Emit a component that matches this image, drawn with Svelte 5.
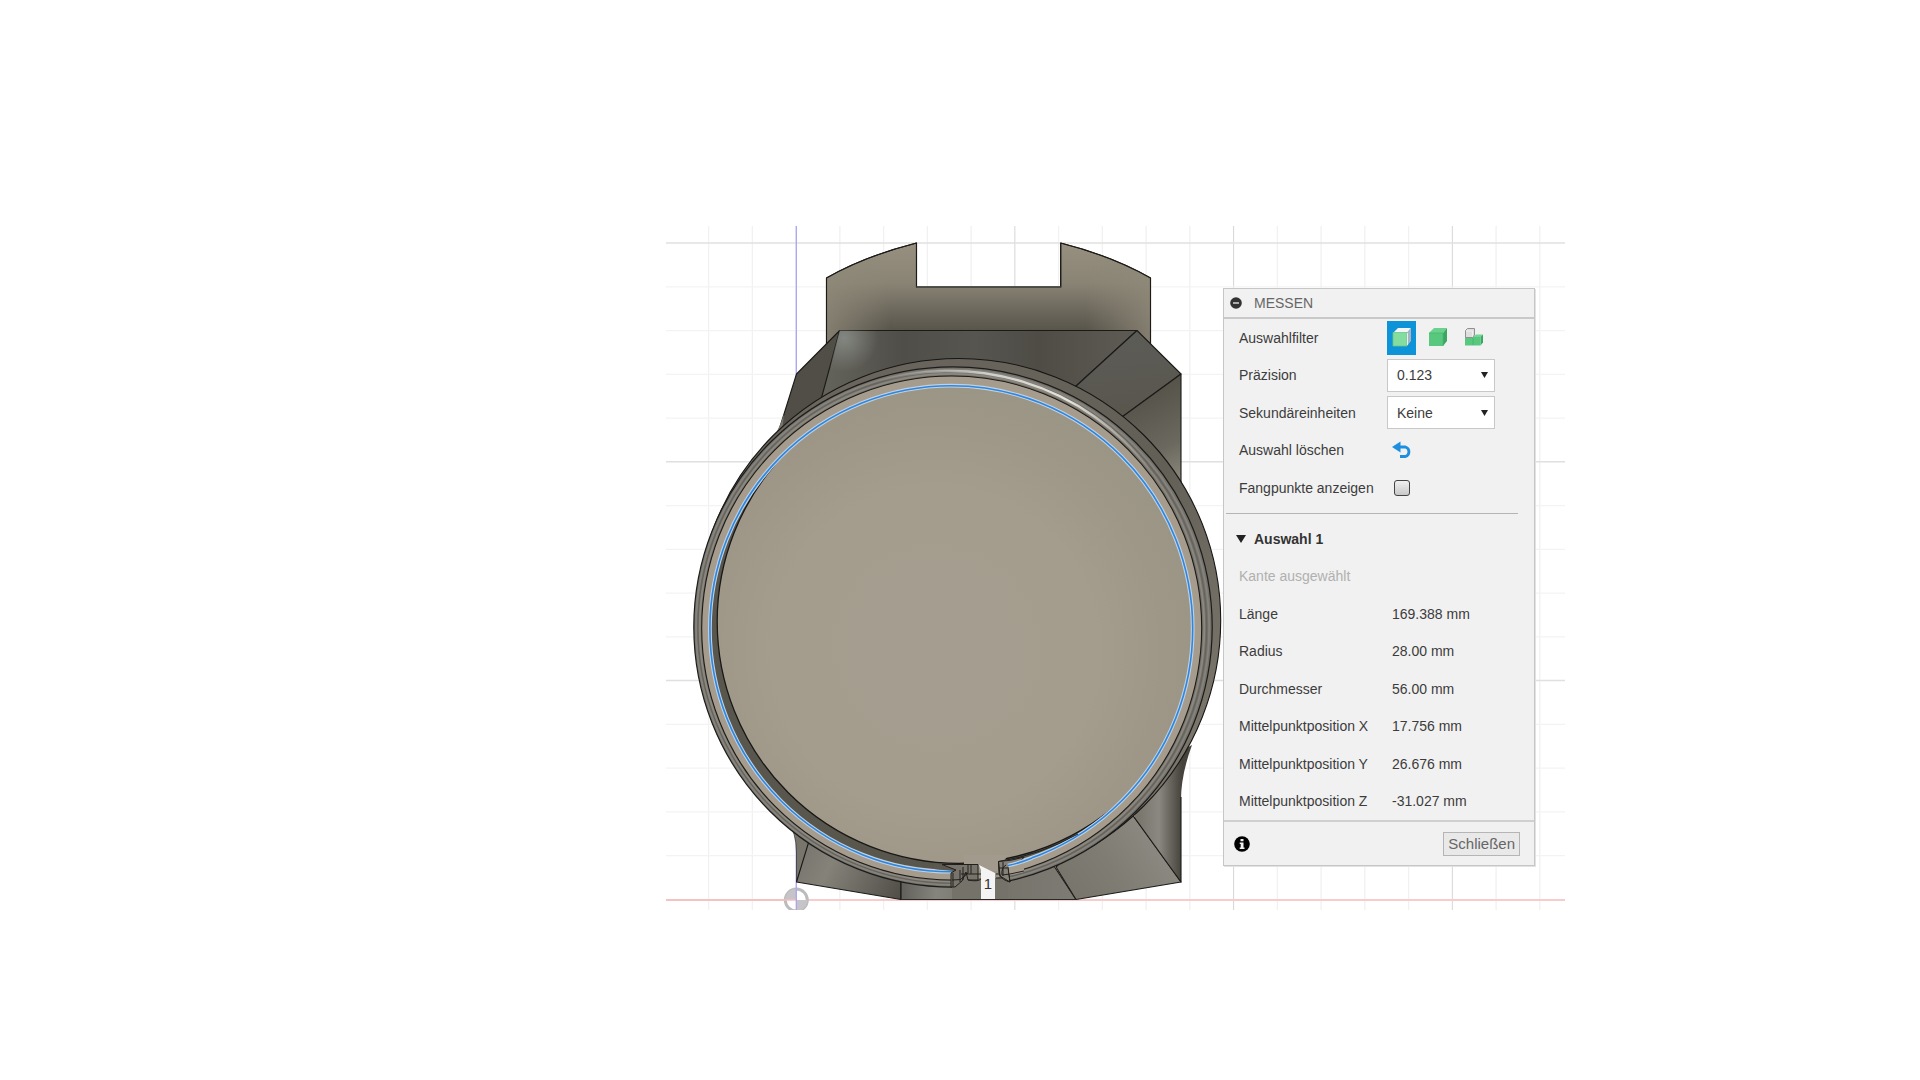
<script>
  const step = 43.75;
  const verticals = Array.from({ length: 20 }, (_, i) => ({ at: 708.6 + i * step, major: i % 5 === 2 && i !== 2 }));
  const horizontals = Array.from({ length: 15 }, (_, i) => ({ at: 243.1 + i * step, major: i % 5 === 0 }));

  const values = [
    ['Länge', '169.388 mm'],
    ['Radius', '28.00 mm'],
    ['Durchmesser', '56.00 mm'],
    ['Mittelpunktposition X', '17.756 mm'],
    ['Mittelpunktposition Y', '26.676 mm'],
    ['Mittelpunktposition Z', '-31.027 mm'],
  ];

  let filter = $state('face');
  let precision = $state('0.123');
  let units = $state('Keine');
  let snap = $state(false);
  let expanded = $state(true);
</script>

<main>
  <section class="viewport">
    <svg class="scene" viewBox="666 226 899 684" role="img" aria-label="3D-Modell">
      <defs>
        <linearGradient id="tab" x1="0" y1="243" x2="0" y2="331" gradientUnits="userSpaceOnUse">
          <stop offset="0" stop-color="#979080" />
          <stop offset=".45" stop-color="#8a8475" />
          <stop offset=".7" stop-color="#736e62" />
          <stop offset="1" stop-color="#57544a" />
        </linearGradient>
        <linearGradient id="tabSides" x1="826" y1="0" x2="1151" y2="0" gradientUnits="userSpaceOnUse">
          <stop offset="0" stop-color="#8f8979" stop-opacity=".8" />
          <stop offset=".2" stop-color="#8f8979" stop-opacity="0" />
          <stop offset=".8" stop-color="#8f8979" stop-opacity="0" />
          <stop offset="1" stop-color="#8f8979" stop-opacity=".8" />
        </linearGradient>
        <linearGradient id="slope" x1="830" y1="340" x2="1120" y2="340" gradientUnits="userSpaceOnUse">
          <stop offset="0" stop-color="#62615a" />
          <stop offset=".25" stop-color="#504e48" />
          <stop offset=".5" stop-color="#575550" />
          <stop offset=".72" stop-color="#4e4c45" />
          <stop offset="1" stop-color="#5b5952" />
        </linearGradient>
        <radialGradient id="glint" cx="844" cy="338" r="34" gradientUnits="userSpaceOnUse">
          <stop offset="0" stop-color="#8a8e88" stop-opacity=".85" />
          <stop offset="1" stop-color="#8a8e88" stop-opacity="0" />
        </radialGradient>
        <linearGradient id="corner" x1="1130" y1="335" x2="1140" y2="410" gradientUnits="userSpaceOnUse">
          <stop offset="0" stop-color="#5c5c57" />
          <stop offset="1" stop-color="#59564e" />
        </linearGradient>
        <linearGradient id="side" x1="1140" y1="400" x2="1181" y2="480" gradientUnits="userSpaceOnUse">
          <stop offset="0" stop-color="#57544b" />
          <stop offset=".6" stop-color="#6b685f" />
          <stop offset="1" stop-color="#8b877b" />
        </linearGradient>
        <linearGradient id="footLeft" x1="800" y1="850" x2="901" y2="899" gradientUnits="userSpaceOnUse">
          <stop offset="0" stop-color="#77756d" />
          <stop offset=".3" stop-color="#85827a" />
          <stop offset=".7" stop-color="#66645c" />
          <stop offset="1" stop-color="#4f4d46" />
        </linearGradient>
        <linearGradient id="footMid" x1="901" y1="0" x2="1076" y2="0" gradientUnits="userSpaceOnUse">
          <stop offset="0" stop-color="#62605a" />
          <stop offset=".2" stop-color="#85847d" />
          <stop offset=".5" stop-color="#747269" />
          <stop offset="1" stop-color="#7d7b73" />
        </linearGradient>
        <linearGradient id="footRight" x1="1060" y1="890" x2="1150" y2="830" gradientUnits="userSpaceOnUse">
          <stop offset="0" stop-color="#77756b" />
          <stop offset=".5" stop-color="#7f7c73" />
          <stop offset="1" stop-color="#8b8981" />
        </linearGradient>
        <linearGradient id="footEdge" x1="1140" y1="0" x2="1182" y2="0" gradientUnits="userSpaceOnUse">
          <stop offset="0" stop-color="#7a776f" />
          <stop offset=".45" stop-color="#8a8880" />
          <stop offset="1" stop-color="#45423b" />
        </linearGradient>
        <linearGradient id="flange" x1="850" y1="360" x2="1220" y2="700" gradientUnits="userSpaceOnUse">
          <stop offset="0" stop-color="#6a665d" />
          <stop offset=".6" stop-color="#625f56" />
          <stop offset="1" stop-color="#7a756b" />
        </linearGradient>
        <radialGradient id="floor" cx="935" cy="650" r="270" gradientUnits="userSpaceOnUse">
          <stop offset="0" stop-color="#a59e90" />
          <stop offset=".6" stop-color="#a49d8e" />
          <stop offset=".85" stop-color="#9e9788" />
          <stop offset="1" stop-color="#9b9586" />
        </radialGradient>
        <linearGradient id="shine" x1="880" y1="370" x2="1150" y2="470" gradientUnits="userSpaceOnUse">
          <stop offset="0" stop-color="#e9e7e2" stop-opacity="0" />
          <stop offset=".35" stop-color="#e9e7e2" stop-opacity=".8" />
          <stop offset=".65" stop-color="#e6e3dc" />
          <stop offset="1" stop-color="#e6e3dc" stop-opacity="0" />
        </linearGradient>
        <clipPath id="pocket"><ellipse cx="951" cy="628.7" rx="241" ry="242.5" /></clipPath>
      </defs>

      <g fill="none">
        {#each verticals as line}
          <path d="M{line.at} 226V910" stroke={line.major ? '#d6d6d6' : '#f1f1f1'} stroke-width={line.major ? 1 : 1.3} />
        {/each}
        {#each horizontals as line}
          <path d="M666 {line.at}H1565" stroke={line.major ? '#e0e0e0' : '#f3f3f3'} stroke-width={line.major ? 1.5 : 1.3} />
        {/each}
        <path d="M666 900H1565" stroke="#f6cccc" stroke-width="2" />
      </g>
      <circle cx="796.3" cy="900" r="11" fill="#fff" stroke="#bcbcbc" stroke-width="3" />
      <path d="M796.3 900V889A11 11 0 0 0 785.3 900ZM796.3 900V911A11 11 0 0 0 807.3 900Z" fill="#c6c4c8" />
      <path d="M666 900H797" stroke="#f4bfbf" stroke-width="1.6" />
      <path d="M796.3 226V910" stroke="#aaa4ee" stroke-width="1.3" />

      <g stroke="#1b1a17" stroke-width="1.1" stroke-linejoin="round">
        <path d="M826.5 350V278Q865 256 916.5 243V287H1060.7V243Q1112 256 1150.5 278V350Z" fill="url(#tab)" />
        <path d="M826.5 350V278Q865 256 916.5 243V287H1060.7V243Q1112 256 1150.5 278V350Z" fill="url(#tabSides)" />
        <path d="M916.5 287H1060.7" stroke="#55534e" stroke-width="1.5" />
        <path d="M839.7 330.5L796.5 374L779 430L790 450L830 400Z" fill="#504e47" />
        <path d="M839.7 330.5H1137L1075 387L1000 440H800L821.7 397Z" fill="url(#slope)" />
        <path d="M839.7 330.5L821.7 397L900 370V331Z" fill="url(#glint)" stroke="none" />
        <path d="M1137 330.5L1181 374L1122 417L1100 420L1075 387Z" fill="url(#corner)" />
        <path d="M1181 374V500L1150 480L1122 417Z" fill="url(#side)" />
        <path d="M784 414Q778 434 766 447L780 452Z" fill="#77756d" stroke="none" />
        <path d="M788 822Q796 832 796.5 852V882L812 835Z" fill="#77756c" stroke-width=".6" />
        <path d="M796.5 882L809 841L860 850L901 875V899.5Z" fill="url(#footLeft)" />
        <path d="M901 899.5V860H1050L1076 899.5Z" fill="url(#footMid)" />
        <path d="M1076 899.5L1056 867L1120 800L1134 817L1181 882Z" fill="url(#footRight)" />
        <path d="M1181 882L1134 817L1165 760L1192 745Q1181 775 1181 800Z" fill="url(#footEdge)" stroke="none" />
        <path d="M1134 817L1181 882V797" fill="none" />
      </g>

      <circle cx="958.7" cy="620.5" r="262" fill="url(#flange)" stroke="#171614" stroke-width="1.1" />
      <ellipse cx="953" cy="627" rx="259.2" ry="260.2" fill="#74726b" stroke="#1d1c1a" stroke-width="1.2" />
      <g fill="none">
        <ellipse cx="952.6" cy="627.2" rx="256.6" ry="257.6" stroke="#85837c" stroke-width="1.8" />
        <ellipse cx="952.3" cy="627.4" rx="254.4" ry="255.8" stroke="#65635c" stroke-width="1.2" />
        <ellipse cx="952" cy="627.7" rx="252.3" ry="253.9" stroke="#8b8880" stroke-width="1.8" />
        <path d="M870 384A254 255.6 0 0 1 1150 469" stroke="url(#shine)" stroke-width="2.4" />
      </g>
      <ellipse cx="951.7" cy="628" rx="250" ry="252" fill="#a59c8d" stroke="#1d1b18" stroke-width="1.1" />
      <ellipse cx="951" cy="628.7" rx="241" ry="242.5" fill="#59564e" />
      <g clip-path="url(#pocket)">
        <circle cx="959" cy="621.5" r="241.8" fill="url(#floor)" stroke="#191816" stroke-width="1.3" />
      </g>
      <g fill="none">
        <ellipse cx="951.3" cy="628.7" rx="241.4" ry="243" stroke="#bfd2e4" stroke-width="3.8" />
        <ellipse cx="951.3" cy="628.7" rx="241.4" ry="243" stroke="#2e86de" stroke-width="1.6" />
      </g>

      <!-- opening of the retaining ring -->
      <path d="M952 866Q985 866 1008 859V900H952Z" fill="#747269" />
      <path d="M964 855H1008L1004 861L998.5 862V872H978V864H964Z" fill="#a29b8d" />
      <path d="M976 871H999V878H976Z" fill="#99948a" />
      <path d="M901 899.5H1076" stroke="#2a2926" stroke-width="1.1" />
      <g stroke="#22201d" stroke-width="1" stroke-linejoin="round">
        <path d="M934 864Q944 864.5 966 865L960 870L953 874V871L934 869Z" fill="#5c5951" stroke="none" />
        <path d="M942 864.5H978V880H968L966 872L962 881L955 887H951V873L956 870Z" fill="#77746b" />
        <path d="M953 873V887M960 870V882M963 867V880M968 865V873L961 879M971 865V874M961 874H978M961 879.5L952 880M968 880Q978 882 981 879M996 874H1002M996 878H1003M978 874H982" fill="none" />
        <path d="M998.500 861.500Q1012 861 1024 857L1020 862L1008 867L1010 882Q1001 880 999 873Z" fill="#858178" />
        <path d="M1008 867L1024 862V872Q1016 874 1009 875Z" fill="#a59c8d" stroke="none" />
        <path d="M998.500 861.500L1000 876L1010 882M1003 862V876M1006 865Q1001 868 1002 875L1010 874L1024 871M1008 867L1010 882M999 868H1007" fill="none" />
        <path d="M998.500 861.500Q1040 855 1078 834" fill="none" />
      </g>
      <path d="M1008 865.500Q1020 863 1032 858" fill="none" stroke="#bfd2e4" stroke-width="3.800" />
      <path d="M1008 865.500Q1020 863 1032 858" fill="none" stroke="#2e86de" stroke-width="1.600" />
      <path d="M979 865L995 873V899H981V870Z" fill="#f4f4f4" />
      <text class="marker" x="988" y="889" text-anchor="middle">1</text>
    </svg>

    <form class="panel" onsubmit={(e) => e.preventDefault()}>
      <header>
        <button type="button" class="plain" aria-label="Einklappen">
          <svg width="12" height="12" viewBox="0 0 12 12"><circle cx="6" cy="6" r="5.8" fill="#333" /><path d="M3 6H9" stroke="#eee" stroke-width="1.3" /></svg>
        </button>
        <h1>MESSEN</h1>
      </header>

      <div class="rows">
        <div class="row">
          <span class="label">Auswahlfilter</span>
          <div class="filters">
            <button type="button" class:active={filter === 'face'} aria-label="Fläche" onclick={() => (filter = 'face')}>
              <svg width="20" height="20" viewBox="0 0 20 20">
                <path d="M1 6L6 1H19L15 6Z" fill="#f3f5f7" /><path d="M15 6L19 1V14L15 19Z" fill="#a9b4c2" />
                <path d="M1 5.5H15V19H1Z" fill="#84dda0" stroke="#69c589" stroke-width=".8" /><path d="M15.5 6V18" stroke="#e8eef2" />
              </svg>
            </button>
            <button type="button" class:active={filter === 'body'} aria-label="Körper" onclick={() => (filter = 'body')}>
              <svg width="20" height="20" viewBox="0 0 20 20">
                <path d="M1 6L6 1H19L15 6Z" fill="#6bd28e" /><path d="M15 6L19 1V14L15 19Z" fill="#3ba763" />
                <path d="M1 6H15V19H1Z" fill="#58c87f" /><path d="M1 6H15V19" fill="none" stroke="#49b770" stroke-width=".8" />
              </svg>
            </button>
            <button type="button" class:active={filter === 'component'} aria-label="Komponente" onclick={() => (filter = 'component')}>
              <svg width="20" height="20" viewBox="0 0 20 20">
                <path d="M9 10L12 7.5H19L16.500 10Z" fill="#72d694" /><path d="M16.500 10L19 7.500V15.500L16.500 18.500Z" fill="#3ba763" />
                <path d="M1 10H16.500V18.500H1Z" fill="#58c87f" /><path d="M9 11V18" stroke="#44b36b" stroke-width=".8" />
                <path d="M1.500 3.500L3.500 1.500H10.500V8L8.500 10.500H1.500Z" fill="#dedede" stroke="#909090" stroke-linejoin="round" />
                <path d="M2 4H8.500V10" fill="none" stroke="#f4f4f4" stroke-width=".8" />
              </svg>
            </button>
          </div>
        </div>
        <div class="row">
          <label for="precision">Präzision</label>
          <div class="select">
            <select id="precision" bind:value={precision}><option>0.123</option><option>0.12</option><option>0.1</option></select>
            <svg width="7" height="6" viewBox="0 0 7 6"><path d="M0 0H7L3.500 6Z" fill="#222" /></svg>
          </div>
        </div>
        <div class="row">
          <label for="units">Sekundäreinheiten</label>
          <div class="select">
            <select id="units" bind:value={units}><option>Keine</option><option>cm</option><option>m</option></select>
            <svg width="7" height="6" viewBox="0 0 7 6"><path d="M0 0H7L3.500 6Z" fill="#222" /></svg>
          </div>
        </div>
        <div class="row">
          <span class="label">Auswahl löschen</span>
          <button type="button" class="plain undo" aria-label="Auswahl löschen">
            <svg width="20" height="18" viewBox="0 0 20 18"><path d="M0 6L8.500 .5V11.500Z" fill="#1e8fe0" /><path d="M6 6H13.500A5 5 0 0 1 13.500 15.500H8" fill="none" stroke="#1e8fe0" stroke-width="2.800" /></svg>
          </button>
        </div>
        <div class="row">
          <label for="snap">Fangpunkte anzeigen</label>
          <input id="snap" type="checkbox" bind:checked={snap} />
        </div>
      </div>

      <hr />

      <div class="rows">
        <button type="button" class="row plain title" aria-expanded={expanded} onclick={() => (expanded = !expanded)}>
          <svg width="10" height="8" viewBox="0 0 10 8"><path d="M0 0H10L5 8Z" fill="#222" /></svg>
          <span>Auswahl 1</span>
        </button>
        {#if expanded}
          <p class="row hint">Kante ausgewählt</p>
          <dl>
            {#each values as [name, value]}
              <div class="row"><dt>{name}</dt><dd>{value}</dd></div>
            {/each}
          </dl>
        {/if}
      </div>

      <footer>
        <button type="button" class="plain" aria-label="Info">
          <svg width="16" height="16" viewBox="0 0 16 16"><circle cx="8" cy="8" r="7.8" fill="#000" /><path d="M6.500 3H9.500V5.300H6.500ZM5.700 6.500H9.500V11.500H10.500V13H5.700V11.500H6.700V8H5.700Z" fill="#f1f1f1" /></svg>
        </button>
        <button type="button" class="close">Schließen</button>
      </footer>
    </form>
  </section>
</main>

<style>
  :global(body) {
    margin: 0;
    background: #fff;
  }
  main {
    display: grid;
    grid-template-columns: 666fr 899fr 355fr;
    padding: 226px 0 170px;
    font: 14px/18px 'Liberation Sans', Arial, sans-serif;
    color: #3c3c3c;
  }
  .viewport {
    grid-column: 2;
    display: grid;
    align-items: start;
  }
  .scene {
    grid-area: 1 / 1;
    display: block;
    width: 100%;
  }
  .marker {
    font-size: 15px;
    fill: #333;
  }
  .panel {
    grid-area: 1 / 1;
    justify-self: end;
    box-sizing: border-box;
    width: 312px;
    margin: 62px 30px 0 0;
    background: #f1f1f1;
    border: 1px solid #c6c6c6;
    box-shadow: 1px 1px 0 #e2e2e2;
  }
  button,
  select {
    font: inherit;
    color: inherit;
  }
  svg {
    display: block;
  }
  .plain {
    border: 0;
    padding: 0;
    background: none;
  }
  header {
    display: flex;
    align-items: center;
    gap: 12px;
    height: 28px;
    padding-left: 6px;
    border-bottom: 2px solid #c9c9c9;
  }
  h1 {
    margin: 0;
    font-size: 14px;
    font-weight: 400;
    color: #666;
  }
  .row {
    display: flex;
    align-items: center;
    box-sizing: border-box;
    width: 100%;
    height: 37px;
    margin: 0;
    padding-left: 15px;
  }
  .row:nth-child(even) {
    height: 38px;
  }
  .label,
  label {
    width: 148px;
  }
  .filters {
    display: flex;
    gap: 7px;
  }
  .filters button {
    display: grid;
    place-items: center;
    width: 29px;
    height: 34px;
    padding: 0 0 2px;
    border: 0;
    background: none;
  }
  .filters .active {
    background: #0c93d8;
  }
  .select {
    display: grid;
    align-items: center;
    width: 108px;
  }
  .select select {
    grid-area: 1 / 1;
    height: 33px;
    padding: 0 9px;
    appearance: none;
    border: 1px solid #c8c8c8;
    border-radius: 0;
    background: #fff;
  }
  .select svg {
    grid-area: 1 / 1;
    justify-self: end;
    margin-right: 7px;
    pointer-events: none;
  }
  .undo {
    margin-left: 5px;
  }
  input {
    appearance: none;
    box-sizing: border-box;
    width: 16px;
    height: 16px;
    margin: 0 0 0 7px;
    border: 1px solid #444;
    border-radius: 3px;
    background: linear-gradient(#f0f0f0, #c8c8c8);
  }
  input:checked {
    background: #0c93d8;
  }
  hr {
    height: 1px;
    margin: 7px 16px 6px 2px;
    border: 0;
    background: #b4b4b4;
  }
  .title {
    gap: 8px;
    padding-left: 12px;
    font-weight: 700;
    color: #333;
  }
  .hint {
    color: #b0b0b0;
  }
  dl,
  dd {
    margin: 0;
  }
  dt {
    width: 153px;
  }
  footer {
    display: flex;
    align-items: center;
    justify-content: space-between;
    height: 43px;
    padding: 0 14px 0 10px;
    border-top: 2px solid #d0d0d0;
  }
  .close {
    height: 24px;
    padding: 0 4px;
    border: 1px solid #b5b5b5;
    background: #e9e9e9;
    color: #666;
    font-size: 15px;
  }
</style>
